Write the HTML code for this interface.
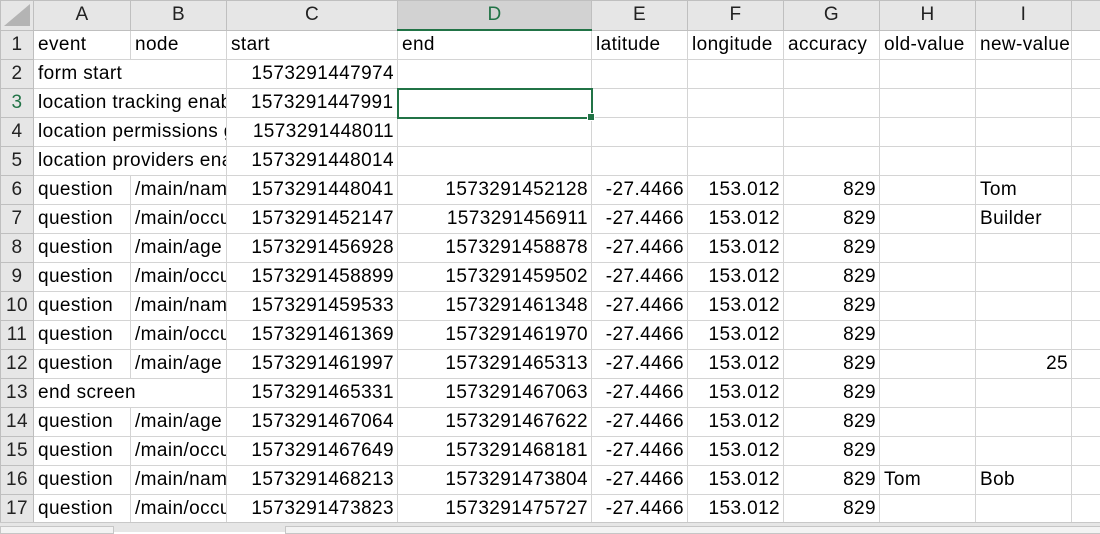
<!DOCTYPE html>
<html><head><style>
body{margin:0;width:1100px;height:531px;overflow:hidden;background:#fff;font-family:"Liberation Sans",sans-serif;}
table{border-collapse:collapse;table-layout:fixed;position:absolute;left:0;top:0;width:1100px}
td{height:28px;padding:0 4px;border:1px solid #d4d4d4;font-size:19px;color:#000;white-space:nowrap;overflow:hidden;line-height:28px;letter-spacing:0.4px;box-sizing:border-box}
td.n{text-align:right;padding-right:3px}
tr.h td{background:#e6e6e6;border-color:#bfbfbf;text-align:center;color:#222;padding:0}
td.r{background:#e6e6e6;border-color:#bfbfbf;text-align:center;color:#222;padding:0}
td.sel{background:#d2d2d2!important;color:#217346!important;border-bottom:2px solid #217346!important}
td.rs{color:#217346}
td.cur{border:2px solid #217346;position:relative}
#bot{position:absolute;left:0;top:522px;width:1100px;height:9px;background:#e6e6e6;border-top:1px solid #c8c8c8}
</style></head><body>
<table>
<colgroup><col style="width:33px"><col style="width:97px"><col style="width:96px"><col style="width:171px"><col style="width:194px"><col style="width:96px"><col style="width:96px"><col style="width:96px"><col style="width:96px"><col style="width:96px"><col style="width:29px"></colgroup>
<tr class="h"><td></td><td>A</td><td>B</td><td>C</td><td class="sel">D</td><td>E</td><td>F</td><td>G</td><td>H</td><td>I</td><td></td></tr>
<tr><td class="r">1</td><td>event</td><td>node</td><td>start</td><td>end</td><td>latitude</td><td>longitude</td><td>accuracy</td><td>old-value</td><td>new-value</td><td></td></tr>
<tr><td class="r">2</td><td colspan="2">form start</td><td class="n">1573291447974</td><td></td><td></td><td></td><td></td><td></td><td></td><td></td></tr>
<tr><td class="r rs">3</td><td colspan="2">location tracking enabled</td><td class="n">1573291447991</td><td class="cur"></td><td></td><td></td><td></td><td></td><td></td><td></td></tr>
<tr><td class="r">4</td><td colspan="2">location permissions granted</td><td class="n">1573291448011</td><td></td><td></td><td></td><td></td><td></td><td></td><td></td></tr>
<tr><td class="r">5</td><td colspan="2">location providers enabled</td><td class="n">1573291448014</td><td></td><td></td><td></td><td></td><td></td><td></td><td></td></tr>
<tr><td class="r">6</td><td>question</td><td>/main/name</td><td class="n">1573291448041</td><td class="n">1573291452128</td><td class="n">-27.4466</td><td class="n">153.012</td><td class="n">829</td><td></td><td>Tom</td><td></td></tr>
<tr><td class="r">7</td><td>question</td><td>/main/occupation</td><td class="n">1573291452147</td><td class="n">1573291456911</td><td class="n">-27.4466</td><td class="n">153.012</td><td class="n">829</td><td></td><td>Builder</td><td></td></tr>
<tr><td class="r">8</td><td>question</td><td>/main/age</td><td class="n">1573291456928</td><td class="n">1573291458878</td><td class="n">-27.4466</td><td class="n">153.012</td><td class="n">829</td><td></td><td></td><td></td></tr>
<tr><td class="r">9</td><td>question</td><td>/main/occupation</td><td class="n">1573291458899</td><td class="n">1573291459502</td><td class="n">-27.4466</td><td class="n">153.012</td><td class="n">829</td><td></td><td></td><td></td></tr>
<tr><td class="r">10</td><td>question</td><td>/main/name</td><td class="n">1573291459533</td><td class="n">1573291461348</td><td class="n">-27.4466</td><td class="n">153.012</td><td class="n">829</td><td></td><td></td><td></td></tr>
<tr><td class="r">11</td><td>question</td><td>/main/occupation</td><td class="n">1573291461369</td><td class="n">1573291461970</td><td class="n">-27.4466</td><td class="n">153.012</td><td class="n">829</td><td></td><td></td><td></td></tr>
<tr><td class="r">12</td><td>question</td><td>/main/age</td><td class="n">1573291461997</td><td class="n">1573291465313</td><td class="n">-27.4466</td><td class="n">153.012</td><td class="n">829</td><td></td><td class="n">25</td><td></td></tr>
<tr><td class="r">13</td><td colspan="2">end screen</td><td class="n">1573291465331</td><td class="n">1573291467063</td><td class="n">-27.4466</td><td class="n">153.012</td><td class="n">829</td><td></td><td></td><td></td></tr>
<tr><td class="r">14</td><td>question</td><td>/main/age</td><td class="n">1573291467064</td><td class="n">1573291467622</td><td class="n">-27.4466</td><td class="n">153.012</td><td class="n">829</td><td></td><td></td><td></td></tr>
<tr><td class="r">15</td><td>question</td><td>/main/occupation</td><td class="n">1573291467649</td><td class="n">1573291468181</td><td class="n">-27.4466</td><td class="n">153.012</td><td class="n">829</td><td></td><td></td><td></td></tr>
<tr><td class="r">16</td><td>question</td><td>/main/name</td><td class="n">1573291468213</td><td class="n">1573291473804</td><td class="n">-27.4466</td><td class="n">153.012</td><td class="n">829</td><td>Tom</td><td>Bob</td><td></td></tr>
<tr><td class="r">17</td><td>question</td><td>/main/occupation</td><td class="n">1573291473823</td><td class="n">1573291475727</td><td class="n">-27.4466</td><td class="n">153.012</td><td class="n">829</td><td></td><td></td><td></td></tr>
</table>
<div style="position:absolute;left:0;top:0;width:0;height:0;border-left:26px solid transparent;border-bottom:22px solid #b4b4b4;margin:4px 0 0 4px"></div>
<div style="position:absolute;left:587px;top:113px;width:6px;height:6px;background:#217346;border:1px solid #fff"></div>
<div id="bot"><div style="position:absolute;left:0;top:3px;width:112px;height:6px;background:#f3f3f3;border:1px solid #c6c6c6"></div><div style="position:absolute;left:285px;top:3px;width:815px;height:6px;background:#f3f3f3;border:1px solid #c6c6c6"></div></div>
</body></html>
